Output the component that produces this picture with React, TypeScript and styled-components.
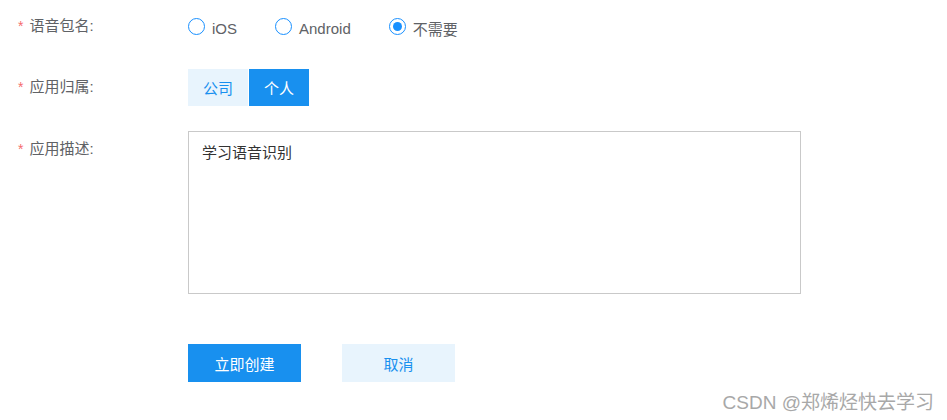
import React, { useState } from "react";
import styled, { createGlobalStyle } from "styled-components";

const Global = createGlobalStyle`
  html, body { margin: 0; padding: 0; background: #fff; }
  body { font-family: "Liberation Sans", "Noto Sans CJK SC", sans-serif; }
  * { box-sizing: border-box; }
`;

const Page = styled.div`
  position: relative;
  width: 947px;
  height: 420px;
  overflow: hidden;
  background: #fff;
`;

const Form = styled.div`
  display: flex;
  flex-direction: column;
  padding: 8px 0 0 18px;
`;

const Row = styled.div<{ $mb: number }>`
  display: flex;
  align-items: flex-start;
  margin-bottom: ${(p) => p.$mb}px;
`;

const Label = styled.div`
  width: 170px;
  flex: none;
  line-height: 36px;
  font-size: 15px;
  color: #606266;
  display: flex;
  align-items: center;
`;

const Star = styled.span`
  color: #f56c6c;
  margin-right: 6px;
  font-size: 14px;
`;

const Control = styled.div`
  display: flex;
  align-items: center;
  min-height: 37px;
`;

const RadioItem = styled.label<{ $mr: number }>`
  display: flex;
  align-items: center;
  margin-right: ${(p) => p.$mr}px;
  cursor: pointer;
  font-size: 15px;
  color: #606266;
`;

const RadioText = styled.span`
  padding-top: 3px;
`;

const RadioCircle = styled.span<{ $checked: boolean }>`
  width: 17px;
  height: 17px;
  border-radius: 50%;
  border: 1px solid #1890ff;
  margin-right: 7px;
  display: flex;
  align-items: center;
  justify-content: center;
  &::after {
    content: "";
    width: 9px;
    height: 9px;
    border-radius: 50%;
    background: #1890ff;
    display: ${(p) => (p.$checked ? "block" : "none")};
  }
`;

const Segment = styled.div`
  display: flex;
  gap: 1px;
`;

const SegButton = styled.button<{ $active: boolean; $w: number }>`
  width: ${(p) => p.$w}px;
  height: 37px;
  border: none;
  padding: 0;
  font-family: inherit;
  font-size: 15px;
  background: ${(p) => (p.$active ? "#1890ef" : "#e8f4fd")};
  color: ${(p) => (p.$active ? "#fff" : "#1890ef")};
  cursor: pointer;
`;

const TextArea = styled.textarea`
  width: 613px;
  height: 163px;
  border: 1px solid #c9c9c9;
  padding: 11px 13px;
  font-family: inherit;
  font-size: 15px;
  line-height: 20px;
  color: #333;
  resize: none;
  outline: none;
  display: block;
`;

const Actions = styled.div`
  display: flex;
  gap: 41px;
  padding-left: 170px;
`;

const ActionButton = styled.button<{ $primary?: boolean }>`
  width: 113px;
  height: 38px;
  border: none;
  font-family: inherit;
  font-size: 15px;
  background: ${(p) => (p.$primary ? "#1890ef" : "#e8f4fd")};
  color: ${(p) => (p.$primary ? "#fff" : "#1890ef")};
  cursor: pointer;
`;

const Watermark = styled.div`
  position: absolute;
  right: 13px;
  bottom: 6px;
  font-size: 19px;
  color: #a8a8a8;
  text-shadow: 0 0 1px #fff;
`;

export default function App() {
  const [pkg, setPkg] = useState("none");
  const [owner, setOwner] = useState("personal");
  const [desc, setDesc] = useState("学习语音识别");
  const radios = [
    { v: "ios", t: "iOS", mr: 38 },
    { v: "android", t: "Android", mr: 38 },
    { v: "none", t: "不需要", mr: 0 },
  ];
  return (
    <Page>
      <Global />
      <Form>
        <Row $mb={24}>
          <Label>
            <Star>*</Star>语音包名:
          </Label>
          <Control>
            {radios.map((r) => (
              <RadioItem key={r.v} $mr={r.mr} onClick={() => setPkg(r.v)}>
                <RadioCircle $checked={pkg === r.v} />
                <RadioText>{r.t}</RadioText>
              </RadioItem>
            ))}
          </Control>
        </Row>
        <Row $mb={25}>
          <Label>
            <Star>*</Star>应用归属:
          </Label>
          <Segment>
            <SegButton $w={60} $active={owner === "company"} onClick={() => setOwner("company")}>
              公司
            </SegButton>
            <SegButton $w={60} $active={owner === "personal"} onClick={() => setOwner("personal")}>
              个人
            </SegButton>
          </Segment>
        </Row>
        <Row $mb={50}>
          <Label>
            <Star>*</Star>应用描述:
          </Label>
          <TextArea value={desc} onChange={(e) => setDesc(e.target.value)} />
        </Row>
        <Actions>
          <ActionButton $primary>立即创建</ActionButton>
          <ActionButton>取消</ActionButton>
        </Actions>
      </Form>
      <Watermark>CSDN @郑烯烃快去学习</Watermark>
    </Page>
  );
}
